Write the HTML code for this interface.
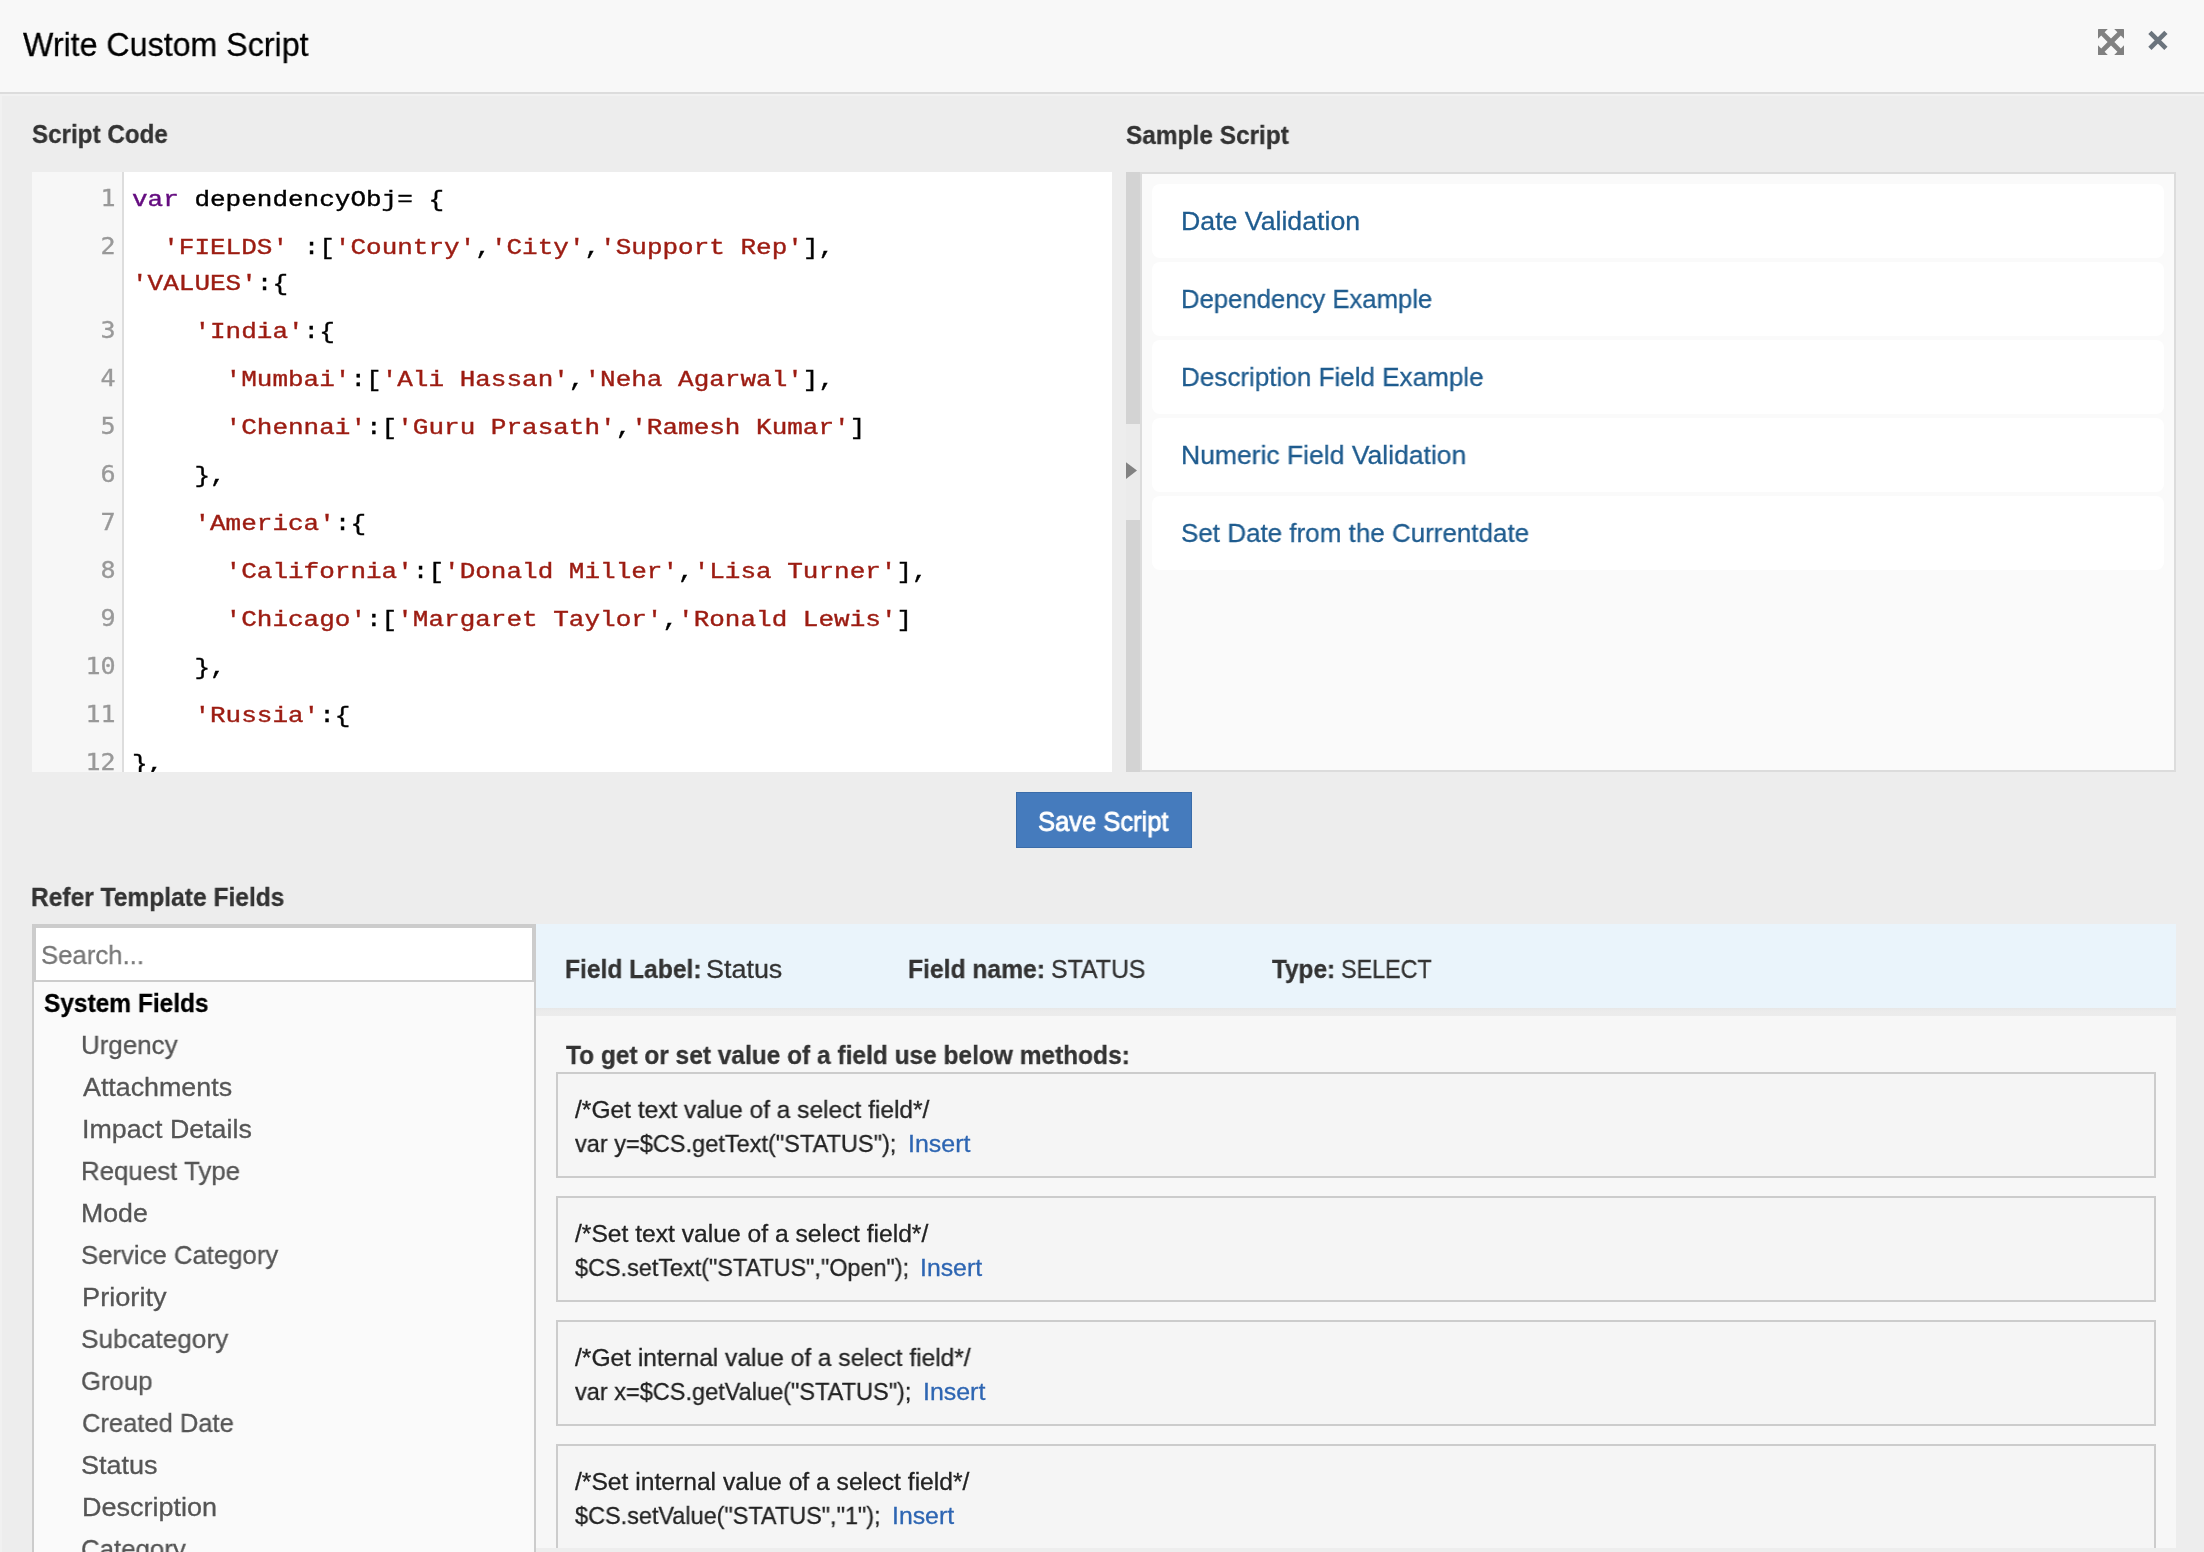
<!DOCTYPE html>
<html lang="en"><head><meta charset="utf-8"><title>Write Custom Script</title>
<style>
html,body{margin:0;padding:0}
body{width:2204px;height:1552px;overflow:hidden;background:#ededed;font-family:"Liberation Sans", Arial, sans-serif;position:relative;-webkit-font-smoothing:antialiased}
div,span,pre{box-sizing:border-box}
h1,h2{margin:0}a{text-decoration:none}code,b{font-family:inherit}
.abs{position:absolute}
.t{position:absolute;white-space:nowrap;line-height:1;transform-origin:0 50%;display:block;will-change:transform;-webkit-text-stroke:0.3px currentColor}
#hdr{position:absolute;left:0;top:0;width:2204px;height:94px;background:#f8f8f8;border-bottom:2px solid #dcdcdc}
#ledge{position:absolute;left:0;top:94px;width:2px;height:1458px;background:#f1f1f1}
#tedge{position:absolute;left:0;top:94px;width:2204px;height:2px;background:#f1f1f1}
#editor{position:absolute;left:32px;top:172px;width:1080px;height:600px;background:#fff;overflow:hidden}
#gutter{position:absolute;left:0;top:0;width:92px;height:600px;background:#f7f7f7;border-right:2px solid #ddd}
.cl{position:absolute;margin:0;transform-origin:0 0;will-change:transform;-webkit-text-stroke:0.4px currentColor;line-height:1;font-family:"Liberation Mono","DejaVu Sans Mono",monospace;color:#000;white-space:pre}
.k{color:#650d80}.s{color:#9c1c12}
.ln{position:absolute;left:0;will-change:transform;-webkit-text-stroke:0.3px currentColor;width:83.6px;transform-origin:100% 50%;transform:scaleX(1.12);text-align:right;line-height:1;font-family:"DejaVu Sans Mono","Liberation Mono",monospace;color:#999;white-space:pre}
#split{position:absolute;left:1126px;top:172px;width:14px;height:600px;background:#d3d3d3}
#splitbtn{position:absolute;left:0;top:252px;width:14px;height:96px;background:#ebebeb}
#sample{position:absolute;left:1140px;top:172px;width:1036px;height:600px;background:#fafafa;border:2px solid #dcdcdc}
.si{position:absolute;left:1152px;width:1012px;height:74px;background:#fff;border-radius:8px}
#savebtn{position:absolute;left:1016px;top:792px;width:176px;height:56px;background:#457bbd;border:1px solid #3a6ca9}
#lpanel{position:absolute;left:32px;top:924px;width:504px;height:640px;background:#fafafa;border:2px solid #ccc}
#sinput{position:absolute;left:34px;top:926px;width:500px;height:56px;background:#fff;border:2px solid #ccc}
#bluehdr{position:absolute;left:536px;top:924px;width:1640px;height:84px;background:#eaf4fb}
#bluesh{position:absolute;left:536px;top:1008px;width:1640px;height:8px;background:linear-gradient(#e7e7e7,#ebebeb 35%,#ececec)}
#rpanel{position:absolute;left:536px;top:1016px;width:1640px;height:532px;background:#f7f7f7;overflow:hidden}
.cb{position:absolute;left:20px;width:1600px;height:106px;background:#f5f5f5;border:2px solid #ccc}
</style></head>
<body>
<header><div id="hdr"></div>
<h1 class="t" id="title" style="left:23.43px;top:28.27px;font-size:33.11px;font-weight:400;color:#000;transform:scaleX(0.9720);">Write Custom Script</h1>
<svg class="abs" style="left:2098px;top:29px" width="26" height="26" viewBox="0 0 26 26"><g fill="#808080">
<path d="M0.6 0 H9.8 L6.6 3.2 L13 9.6 L19.4 3.2 L16.2 0 H25.4 Q26 0 26 0.6 V9.8 L22.8 6.6 L16.4 13 L22.8 19.4 L26 16.2 V25.4 Q26 26 25.4 26 H16.2 L19.4 22.8 L13 16.4 L6.6 22.8 L9.8 26 H0.6 Q0 26 0 25.4 V16.2 L3.2 19.4 L9.6 13 L3.2 6.6 L0 9.8 V0.6 Q0 0 0.6 0 Z"/></g></svg>
<svg class="abs" style="left:2148px;top:30px" width="20" height="21" viewBox="0 0 20 21"><g stroke="#6b747d" stroke-width="4.6" fill="none"><path d="M1.9 2.4 L17.9 18.4 M17.9 2.4 L1.9 18.4"/></g></svg>
</header>
<main><div id="ledge"></div><div id="tedge"></div>
<section id="sec-code">
<h2 class="t" id="lblcode" style="left:32.43px;top:121.44px;font-size:26.65px;font-weight:700;color:#333;transform:scaleX(0.9078);">Script Code</h2>
<div id="editor"><div id="gutter"></div>
<pre class="cl" style="top:16.86px;left:100px;font-size:22.50px;transform:scaleX(1.1554)"><span class="k">var</span> dependencyObj= {</pre>
<div class="ln" style="top:15.25px;font-size:22.40px">1</div>
<pre class="cl" style="top:64.66px;left:100px;font-size:22.50px;transform:scaleX(1.1554)">  <span class="s">'FIELDS'</span> :[<span class="s">'Country'</span>,<span class="s">'City'</span>,<span class="s">'Support Rep'</span>],</pre>
<div class="ln" style="top:63.05px;font-size:22.40px">2</div>
<pre class="cl" style="top:100.86px;left:100px;font-size:22.50px;transform:scaleX(1.1554)"><span class="s">'VALUES'</span>:{</pre>
<pre class="cl" style="top:148.66px;left:100px;font-size:22.50px;transform:scaleX(1.1554)">    <span class="s">'India'</span>:{</pre>
<div class="ln" style="top:147.05px;font-size:22.40px">3</div>
<pre class="cl" style="top:196.66px;left:100px;font-size:22.50px;transform:scaleX(1.1554)">      <span class="s">'Mumbai'</span>:[<span class="s">'Ali Hassan'</span>,<span class="s">'Neha Agarwal'</span>],</pre>
<div class="ln" style="top:195.05px;font-size:22.40px">4</div>
<pre class="cl" style="top:244.66px;left:100px;font-size:22.50px;transform:scaleX(1.1554)">      <span class="s">'Chennai'</span>:[<span class="s">'Guru Prasath'</span>,<span class="s">'Ramesh Kumar'</span>]</pre>
<div class="ln" style="top:243.05px;font-size:22.40px">5</div>
<pre class="cl" style="top:292.66px;left:100px;font-size:22.50px;transform:scaleX(1.1554)">    },</pre>
<div class="ln" style="top:291.05px;font-size:22.40px">6</div>
<pre class="cl" style="top:340.66px;left:100px;font-size:22.50px;transform:scaleX(1.1554)">    <span class="s">'America'</span>:{</pre>
<div class="ln" style="top:339.05px;font-size:22.40px">7</div>
<pre class="cl" style="top:388.66px;left:100px;font-size:22.50px;transform:scaleX(1.1554)">      <span class="s">'California'</span>:[<span class="s">'Donald Miller'</span>,<span class="s">'Lisa Turner'</span>],</pre>
<div class="ln" style="top:387.05px;font-size:22.40px">8</div>
<pre class="cl" style="top:436.66px;left:100px;font-size:22.50px;transform:scaleX(1.1554)">      <span class="s">'Chicago'</span>:[<span class="s">'Margaret Taylor'</span>,<span class="s">'Ronald Lewis'</span>]</pre>
<div class="ln" style="top:435.05px;font-size:22.40px">9</div>
<pre class="cl" style="top:484.66px;left:100px;font-size:22.50px;transform:scaleX(1.1554)">    },</pre>
<div class="ln" style="top:483.05px;font-size:22.40px">10</div>
<pre class="cl" style="top:532.66px;left:100px;font-size:22.50px;transform:scaleX(1.1554)">    <span class="s">'Russia'</span>:{</pre>
<div class="ln" style="top:531.05px;font-size:22.40px">11</div>
<pre class="cl" style="top:580.66px;left:100px;font-size:22.50px;transform:scaleX(1.1554)">},</pre>
<div class="ln" style="top:579.05px;font-size:22.40px">12</div>
</div></section>
<div id="split"><div id="splitbtn"></div><svg class="abs" style="left:0;top:289px" width="14" height="20" viewBox="0 0 14 20"><path d="M0 1.2 L11 9.6 L0 18 Z" fill="#828282"/></svg></div>
<section id="sec-sample">
<h2 class="t" id="lblsample" style="left:1126.21px;top:121.64px;font-size:26.65px;font-weight:700;color:#333;transform:scaleX(0.9168);">Sample Script</h2>
<div id="sample"></div>
<div class="si" style="top:184px"></div>
<div class="si" style="top:262px"></div>
<div class="si" style="top:340px"></div>
<div class="si" style="top:418px"></div>
<div class="si" style="top:496px"></div>
<a class="t" id="s0" style="left:1180.50px;top:207.64px;font-size:26.65px;font-weight:400;color:#1f5c8f;transform:scaleX(1.0024);">Date Validation</a>
<a class="t" id="s1" style="left:1180.73px;top:285.64px;font-size:26.65px;font-weight:400;color:#1f5c8f;transform:scaleX(0.9640);">Dependency Example</a>
<a class="t" id="s2" style="left:1180.54px;top:363.64px;font-size:26.65px;font-weight:400;color:#1f5c8f;transform:scaleX(0.9776);">Description Field Example</a>
<a class="t" id="s3" style="left:1180.53px;top:441.64px;font-size:26.65px;font-weight:400;color:#1f5c8f;transform:scaleX(0.9947);">Numeric Field Validation</a>
<a class="t" id="s4" style="left:1181.36px;top:519.64px;font-size:26.65px;font-weight:400;color:#1f5c8f;transform:scaleX(0.9755);">Set Date from the Currentdate</a>
</section>
<div id="savebtn"></div>
<span class="t" id="save" style="left:1038.19px;top:807.62px;font-size:27.27px;font-weight:400;color:#fff;transform:scaleX(0.9362);-webkit-text-stroke:0.85px #fff;">Save Script</span>
<section id="sec-fields">
<h2 class="t" id="lblrefer" style="left:31.45px;top:883.64px;font-size:26.65px;font-weight:700;color:#333;transform:scaleX(0.9218);">Refer Template Fields</h2>
<div id="lpanel"></div><div id="sinput"></div>
<span class="t" id="search" style="left:41.06px;top:941.64px;font-size:26.65px;font-weight:400;color:#777;transform:scaleX(0.9658);">Search...</span>
<h2 class="t" id="sysf" style="left:44.14px;top:989.54px;font-size:26.65px;font-weight:700;color:#000;transform:scaleX(0.9188);">System Fields</h2>
<span class="t" id="f0" style="left:81.14px;top:1031.54px;font-size:26.65px;font-weight:400;color:#555;transform:scaleX(0.9730);">Urgency</span>
<span class="t" id="f1" style="left:82.94px;top:1073.54px;font-size:26.65px;font-weight:400;color:#555;transform:scaleX(1.0065);">Attachments</span>
<span class="t" id="f2" style="left:81.59px;top:1115.54px;font-size:26.65px;font-weight:400;color:#555;transform:scaleX(1.0061);">Impact Details</span>
<span class="t" id="f3" style="left:81.29px;top:1157.54px;font-size:26.65px;font-weight:400;color:#555;transform:scaleX(0.9707);">Request Type</span>
<span class="t" id="f4" style="left:81.15px;top:1199.54px;font-size:26.65px;font-weight:400;color:#555;transform:scaleX(1.0023);">Mode</span>
<span class="t" id="f5" style="left:81.39px;top:1241.54px;font-size:26.65px;font-weight:400;color:#555;transform:scaleX(0.9652);">Service Category</span>
<span class="t" id="f6" style="left:81.75px;top:1283.54px;font-size:26.65px;font-weight:400;color:#555;transform:scaleX(1.0203);">Priority</span>
<span class="t" id="f7" style="left:81.37px;top:1325.54px;font-size:26.65px;font-weight:400;color:#555;transform:scaleX(0.9843);">Subcategory</span>
<span class="t" id="f8" style="left:81.46px;top:1367.54px;font-size:26.65px;font-weight:400;color:#555;transform:scaleX(0.9650);">Group</span>
<span class="t" id="f9" style="left:81.54px;top:1409.54px;font-size:26.65px;font-weight:400;color:#555;transform:scaleX(0.9573);">Created Date</span>
<span class="t" id="f10" style="left:81.18px;top:1451.54px;font-size:26.65px;font-weight:400;color:#555;transform:scaleX(1.0143);">Status</span>
<span class="t" id="f11" style="left:81.94px;top:1493.54px;font-size:26.65px;font-weight:400;color:#555;transform:scaleX(1.0137);">Description</span>
<span class="t" id="f12" style="left:81.28px;top:1535.54px;font-size:26.65px;font-weight:400;color:#555;transform:scaleX(0.9693);">Category</span>
</section>
<section id="sec-detail">
<div id="bluehdr"></div><div id="bluesh"></div><div id="rpanel">
<div class="cb" style="top:56px"></div>
<div class="cb" style="top:180px"></div>
<div class="cb" style="top:304px"></div>
<div class="cb" style="top:428px"></div>
</div>
<b class="t" id="h1a" style="left:565.40px;top:955.84px;font-size:26.65px;font-weight:700;color:#333;transform:scaleX(0.9218);">Field Label:</b>
<span class="t" id="h1b" style="left:706.20px;top:955.84px;font-size:26.65px;font-weight:400;color:#333;transform:scaleX(1.0104);">Status</span>
<b class="t" id="h2a" style="left:908.40px;top:955.84px;font-size:26.65px;font-weight:700;color:#333;transform:scaleX(0.9253);">Field name:</b>
<span class="t" id="h2b" style="left:1050.95px;top:955.84px;font-size:26.65px;font-weight:400;color:#333;transform:scaleX(0.9344);">STATUS</span>
<b class="t" id="h3a" style="left:1272.21px;top:955.84px;font-size:26.65px;font-weight:700;color:#333;transform:scaleX(0.9130);">Type:</b>
<span class="t" id="h3b" style="left:1340.82px;top:955.84px;font-size:26.65px;font-weight:400;color:#333;transform:scaleX(0.8768);">SELECT</span>
<h2 class="t" id="toget" style="left:566.02px;top:1041.84px;font-size:26.65px;font-weight:700;color:#333;transform:scaleX(0.9185);">To get or set value of a field use below methods:</h2>
<code class="t" id="b0a" style="left:574.99px;top:1097.98px;font-size:24.60px;font-weight:400;color:#222;transform:scaleX(0.9972);">/*Get text value of a select field*/</code>
<code class="t" id="b0b" style="left:575.03px;top:1131.88px;font-size:24.60px;font-weight:400;color:#222;transform:scaleX(0.9573);">var y=$CS.getText(&quot;STATUS&quot;);</code>
<a class="t" id="b0i" style="left:908.42px;top:1131.88px;font-size:24.60px;font-weight:400;color:#2d65b2;transform:scaleX(1.0144);">Insert</a>
<code class="t" id="b1a" style="left:574.99px;top:1221.98px;font-size:24.60px;font-weight:400;color:#222;transform:scaleX(1.0017);">/*Set text value of a select field*/</code>
<code class="t" id="b1b" style="left:574.96px;top:1255.88px;font-size:24.60px;font-weight:400;color:#222;transform:scaleX(0.9517);">$CS.setText(&quot;STATUS&quot;,&quot;Open&quot;);</code>
<a class="t" id="b1i" style="left:920.24px;top:1255.88px;font-size:24.60px;font-weight:400;color:#2d65b2;transform:scaleX(1.0086);">Insert</a>
<code class="t" id="b2a" style="left:574.99px;top:1345.98px;font-size:24.60px;font-weight:400;color:#222;transform:scaleX(0.9982);">/*Get internal value of a select field*/</code>
<code class="t" id="b2b" style="left:575.03px;top:1379.88px;font-size:24.60px;font-weight:400;color:#222;transform:scaleX(0.9567);">var x=$CS.getValue(&quot;STATUS&quot;);</code>
<a class="t" id="b2i" style="left:922.82px;top:1379.88px;font-size:24.60px;font-weight:400;color:#2d65b2;transform:scaleX(1.0135);">Insert</a>
<code class="t" id="b3a" style="left:574.99px;top:1469.98px;font-size:24.60px;font-weight:400;color:#222;transform:scaleX(1.0018);">/*Set internal value of a select field*/</code>
<code class="t" id="b3b" style="left:574.96px;top:1503.88px;font-size:24.60px;font-weight:400;color:#222;transform:scaleX(0.9532);">$CS.setValue(&quot;STATUS&quot;,&quot;1&quot;);</code>
<a class="t" id="b3i" style="left:891.95px;top:1503.88px;font-size:24.60px;font-weight:400;color:#2d65b2;transform:scaleX(1.0087);">Insert</a>
</section></main>
</body></html>
